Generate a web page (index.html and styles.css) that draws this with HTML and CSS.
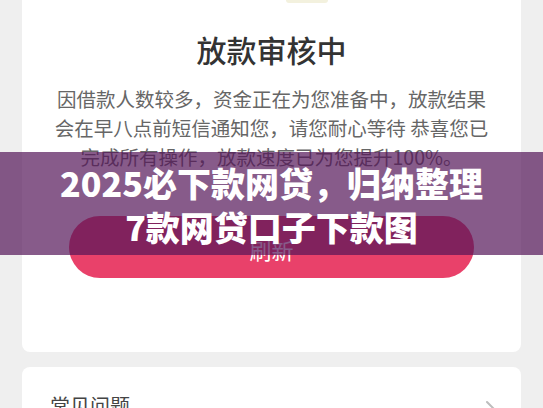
FILE: index.html
```html
<!DOCTYPE html>
<html lang="zh-CN">
<head>
  <meta charset="UTF-8" />
  <meta name="viewport" content="width=device-width, initial-scale=1.0"/>
  <title>放款审核中</title>
  <link rel="stylesheet" href="styles.css">
</head>
<body>
  <main class="page">
    <section class="card status-card">
      <div class="status-icon"></div>
      <h1 class="status-title">放款审核中</h1>
      <p class="status-text">因借款人数较多，资金正在为您准备中，放款结果会在早八点前短信通知您，请您耐心等待 恭喜您已完成所有操作，放款速度已为您提升100%。</p>
      <button class="refresh-btn" type="button">刷新</button>
    </section>

    <section class="card faq-card">
      <div class="faq-row">
        <span class="faq-label">常见问题</span>
        <svg class="chevron" width="12" height="20" viewBox="0 0 12 20">
          <path d="M2 2 L10 10 L2 18" fill="none" stroke="#bdbdbd" stroke-width="2" stroke-linecap="round" stroke-linejoin="round"/>
        </svg>
      </div>
    </section>
  </main>

  <!-- caption strip laid over the screenshot -->
  <div class="banner">
    <div class="banner-line">2025必下款网贷，归纳整理</div>
    <div class="banner-line">7款网贷口子下款图</div>
  </div>
</body>
</html>
```

FILE: styles.css
```css
body {
  font-family: "Noto Sans CJK SC", "Noto Sans", sans-serif;
  background-color: #efefef;
  margin: 0;
  padding: 0;
  width: 543px;
  height: 408px;
  overflow: hidden;
  position: relative;
}

.page {
  padding: 0 22px;
}

.card {
  background: #fff;
  border-radius: 8px;
}

.status-card {
  border-radius: 0 0 8px 8px;
  padding: 0 30px 74px;
  display: flex;
  flex-direction: column;
  align-items: center;
}

.status-icon {
  width: 42px;
  height: 3px;
  margin-left: 70px;
  background: #f3f1de;
  border-radius: 0 0 20px 20px;
}

.status-title {
  margin: 25px 0 0;
  font-size: 30px;
  line-height: 42px;
  font-weight: 500;
  color: #333;
}

.status-text {
  margin: 14px 0 0;
  font-size: 19.5px;
  line-height: 29px;
  color: #666;
  text-align: center;
}

.refresh-btn {
  margin-top: 45px;
  width: 405px;
  height: 62px;
  border: none;
  border-radius: 31px;
  background-color: #e9416a;
  color: #fff;
  font-family: inherit;
  font-size: 22px;
  padding-top: 5px;
  cursor: pointer;
}

.faq-card {
  margin-top: 15px;
  padding: 25px 24px 30px 28px;
}

.faq-row {
  display: flex;
  align-items: center;
  justify-content: space-between;
}

.faq-label {
  font-size: 20px;
  line-height: 28px;
  color: #444;
}

.chevron {
  margin-top: 8px;
}

.banner {
  position: absolute;
  top: 152px;
  left: 0;
  right: 0;
  height: 103px;
  box-sizing: border-box;
  padding-top: 9px;
  background: rgba(84, 21, 89, 0.7);
  text-align: center;
  color: #fff;
  font-size: 34px;
  line-height: 44px;
  font-weight: 900;
}
```
